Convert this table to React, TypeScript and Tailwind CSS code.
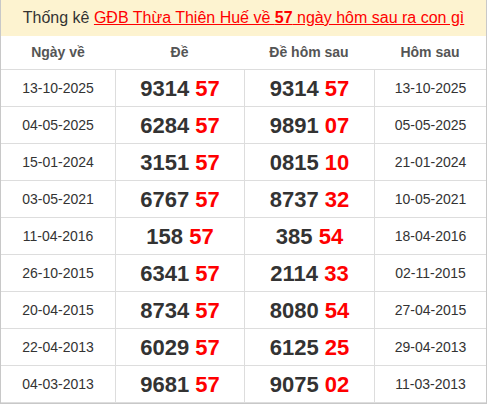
import React from "react";

const rows: [string, string, string, string, string, string][] = [
  ["13-10-2025", "9314", "57", "9314", "57", "13-10-2025"],
  ["04-05-2025", "6284", "57", "9891", "07", "05-05-2025"],
  ["15-01-2024", "3151", "57", "0815", "10", "21-01-2024"],
  ["03-05-2021", "6767", "57", "8737", "32", "10-05-2021"],
  ["11-04-2016", "158", "57", "385", "54", "18-04-2016"],
  ["26-10-2015", "6341", "57", "2114", "33", "02-11-2015"],
  ["20-04-2015", "8734", "57", "8080", "54", "27-04-2015"],
  ["22-04-2013", "6029", "57", "6125", "25", "29-04-2013"],
  ["04-03-2013", "9681", "57", "9075", "02", "11-03-2013"],
];

export default function App() {
  return (
    <div className="w-[488px] h-[405px] bg-white" style={{ fontFamily: '"Liberation Sans", Arial, sans-serif' }}>
      <div className="w-[487px] border-x border-b border-[#c8c8c8]">
        <div className="h-[36px] bg-[#fdf3d0] flex items-center justify-center text-[16px] text-[#333]">
          <span>
            Thống kê{" "}
            <span className="text-[#ff0000] underline">
              GĐB Thừa Thiên Huế về <b>57</b> ngày hôm sau ra con gì
            </span>
          </span>
        </div>
        <div className="grid grid-cols-[114px_129px_130px_112px] h-[34px] border-b border-[#dddddd] text-[14px] font-bold text-[#555] items-center text-center">
          <div>Ngày về</div>
          <div>Đề</div>
          <div>Đề hôm sau</div>
          <div>Hôm sau</div>
        </div>
        {rows.map((r, i) => (
          <div
            key={i}
            className="grid grid-cols-[114px_129px_130px_112px] h-[37px] border-b border-[#dddddd] text-center"
          >
            <div className="flex items-center justify-center text-[14px] text-[#333]">{r[0]}</div>
            <div className="flex items-center justify-center border-l border-[#dddddd] text-[22px] font-bold text-[#333]">
              {r[1]}&nbsp;<span className="text-[#ff0000]">{r[2]}</span>
            </div>
            <div className="flex items-center justify-center border-l border-[#dddddd] text-[22px] font-bold text-[#333]">
              {r[3]}&nbsp;<span className="text-[#ff0000]">{r[4]}</span>
            </div>
            <div className="flex items-center justify-center border-l border-[#dddddd] text-[14px] text-[#333]">{r[5]}</div>
          </div>
        ))}
      </div>
    </div>
  );
}
